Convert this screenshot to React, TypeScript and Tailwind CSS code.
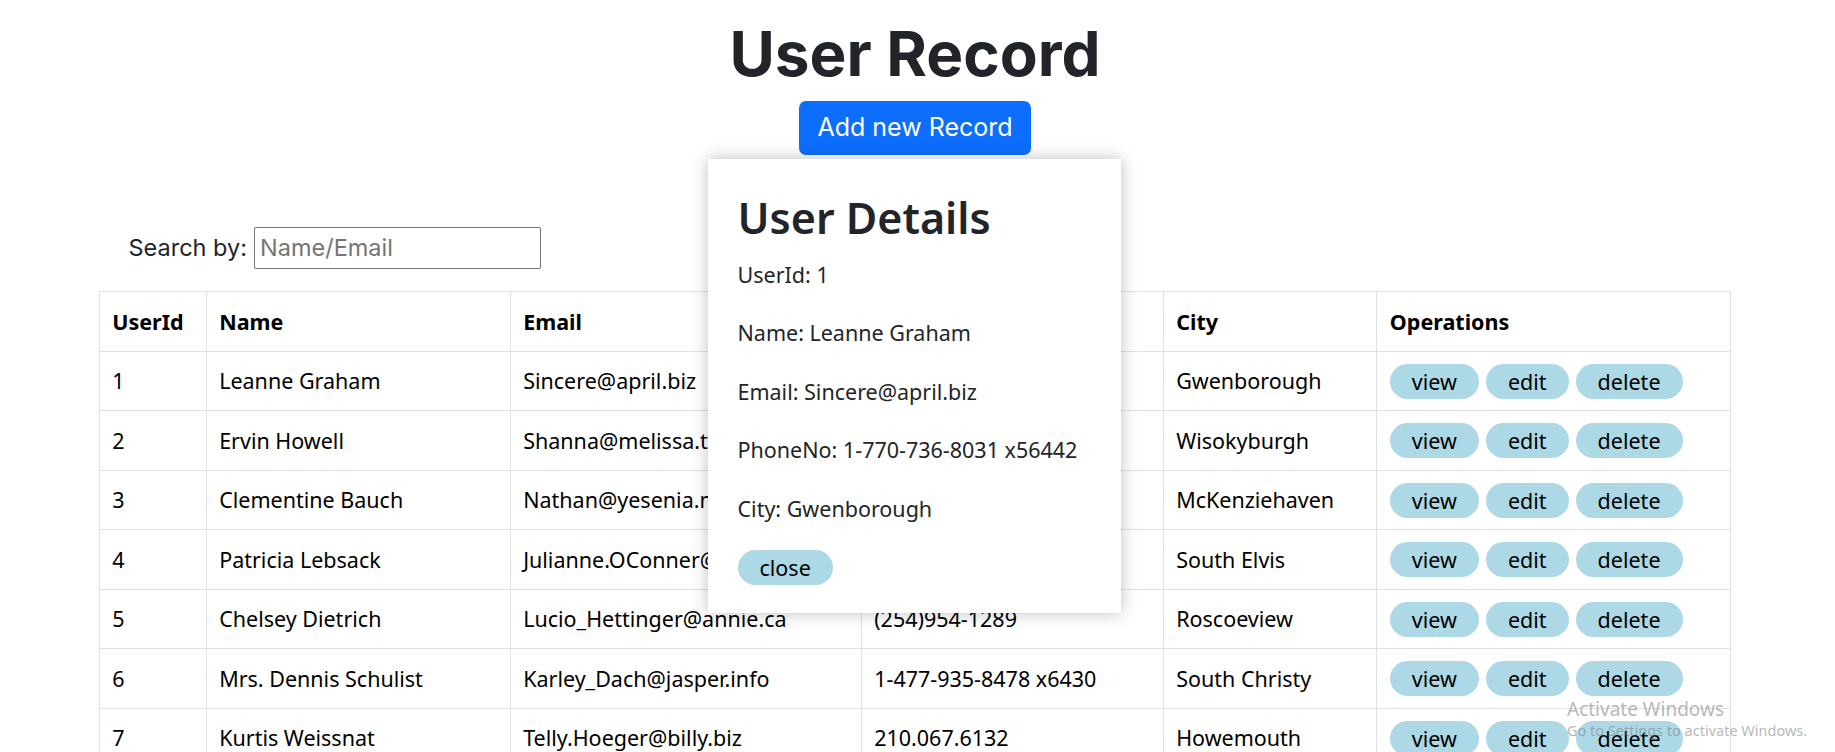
import React from "react";

const users = [
  { id: 1, name: "Leanne Graham", email: "Sincere@april.biz", phone: "1-770-736-8031 x56442", city: "Gwenborough" },
  { id: 2, name: "Ervin Howell", email: "Shanna@melissa.tv", phone: "010-692-6593 x09125", city: "Wisokyburgh" },
  { id: 3, name: "Clementine Bauch", email: "Nathan@yesenia.net", phone: "1-463-123-4447", city: "McKenziehaven" },
  { id: 4, name: "Patricia Lebsack", email: "Julianne.OConner@kory.org", phone: "493-170-9623 x156", city: "South Elvis" },
  { id: 5, name: "Chelsey Dietrich", email: "Lucio_Hettinger@annie.ca", phone: "(254)954-1289", city: "Roscoeview" },
  { id: 6, name: "Mrs. Dennis Schulist", email: "Karley_Dach@jasper.info", phone: "1-477-935-8478 x6430", city: "South Christy" },
  { id: 7, name: "Kurtis Weissnat", email: "Telly.Hoeger@billy.biz", phone: "210.067.6132", city: "Howemouth" },
];

function OpButton({ label }: { label: string }) {
  return (
    <button className="h-[35px] px-[22px] rounded-full bg-[#add8e6] text-black text-[21.5px] leading-[35px] font-['Noto_Sans',sans-serif]">
      {label}
    </button>
  );
}

export default function App() {
  const cell = "border border-[#dee2e6] px-[12.5px] pt-[1px] align-middle";
  return (
    <div className="relative h-[752px] w-[1835px] overflow-hidden bg-white">
      <div className="w-[1830px] flex flex-col">
        <h1 className="mt-[17px] text-center font-['Inter',sans-serif] font-bold text-[62px] leading-[73px] text-[#212529]">
          User Record
        </h1>
        <div className="mt-[10.5px] flex justify-center">
          <button className="h-[54px] w-[232px] rounded-[7px] bg-[#0d6efd] text-white font-['Inter',sans-serif] text-[25px]">
            Add new Record
          </button>
        </div>
        <div className="mt-[72.5px] ml-[128.5px] flex items-center gap-[7px] font-['Inter',sans-serif] text-[23.5px] text-[#212529]">
          <span>Search by:</span>
          <input
            type="text"
            placeholder="Name/Email"
            className="h-[41.5px] w-[287px] rounded-[2px] border border-[#767676] pl-[5px] text-[23.5px] font-['Inter',sans-serif] placeholder:text-[#757575] outline-none"
          />
        </div>
        <table className="mt-[22.5px] mx-auto w-[1631.6px] table-fixed border-collapse font-['Noto_Sans',sans-serif] text-[21.5px] leading-[34px] text-black">
          <colgroup>
            <col className="w-[107px]" />
            <col className="w-[304px]" />
            <col className="w-[351px]" />
            <col className="w-[302px]" />
            <col className="w-[213.7px]" />
            <col className="w-[354px]" />
          </colgroup>
          <thead>
            <tr className="h-[59.5px] text-left font-bold">
              <th className={cell}>UserId</th>
              <th className={cell}>Name</th>
              <th className={cell}>Email</th>
              <th className={cell}>PhoneNo</th>
              <th className={cell}>City</th>
              <th className={cell}>Operations</th>
            </tr>
          </thead>
          <tbody>
            {users.map((u) => (
              <tr key={u.id} className="h-[59.5px]">
                <td className={cell}>{u.id}</td>
                <td className={cell}>{u.name}</td>
                <td className={cell}>{u.email}</td>
                <td className={cell}>{u.phone}</td>
                <td className={cell}>{u.city}</td>
                <td className={cell}>
                  <div className="flex gap-[7px]">
                    <OpButton label="view" />
                    <OpButton label="edit" />
                    <OpButton label="delete" />
                  </div>
                </td>
              </tr>
            ))}
          </tbody>
        </table>
      </div>

      <div className="absolute left-[708px] top-[159px] h-[454px] w-[413px] bg-white pl-[29.5px] pt-[33px] shadow-[0_0_16px_rgba(0,0,0,0.25)] font-['Noto_Sans',sans-serif] text-[#212529]">
        <h2 className="mb-[13px] text-[43px] font-semibold leading-[52.8px]">User Details</h2>
        <p className="mb-[24.5px] text-[21.5px] leading-[34px]">UserId: 1</p>
        <p className="mb-[24.5px] text-[21.5px] leading-[34px]">Name: Leanne Graham</p>
        <p className="mb-[24.5px] text-[21.5px] leading-[34px]">Email: Sincere@april.biz</p>
        <p className="mb-[24.5px] text-[21.5px] leading-[34px]">PhoneNo: 1-770-736-8031 x56442</p>
        <p className="mb-[24.5px] text-[21.5px] leading-[34px]">City: Gwenborough</p>
        <button className="h-[35px] px-[22px] rounded-full bg-[#add8e6] text-black text-[21.5px] leading-[35px]">
          close
        </button>
      </div>

      <div className="pointer-events-none absolute left-[1567px] top-[697px] font-['Noto_Sans',sans-serif] text-[rgba(120,120,120,0.55)]">
        <div className="text-[19px] leading-[24px]">Activate Windows</div>
        <div className="text-[14.5px] leading-[18px]">Go to Settings to activate Windows.</div>
      </div>
    </div>
  );
}
